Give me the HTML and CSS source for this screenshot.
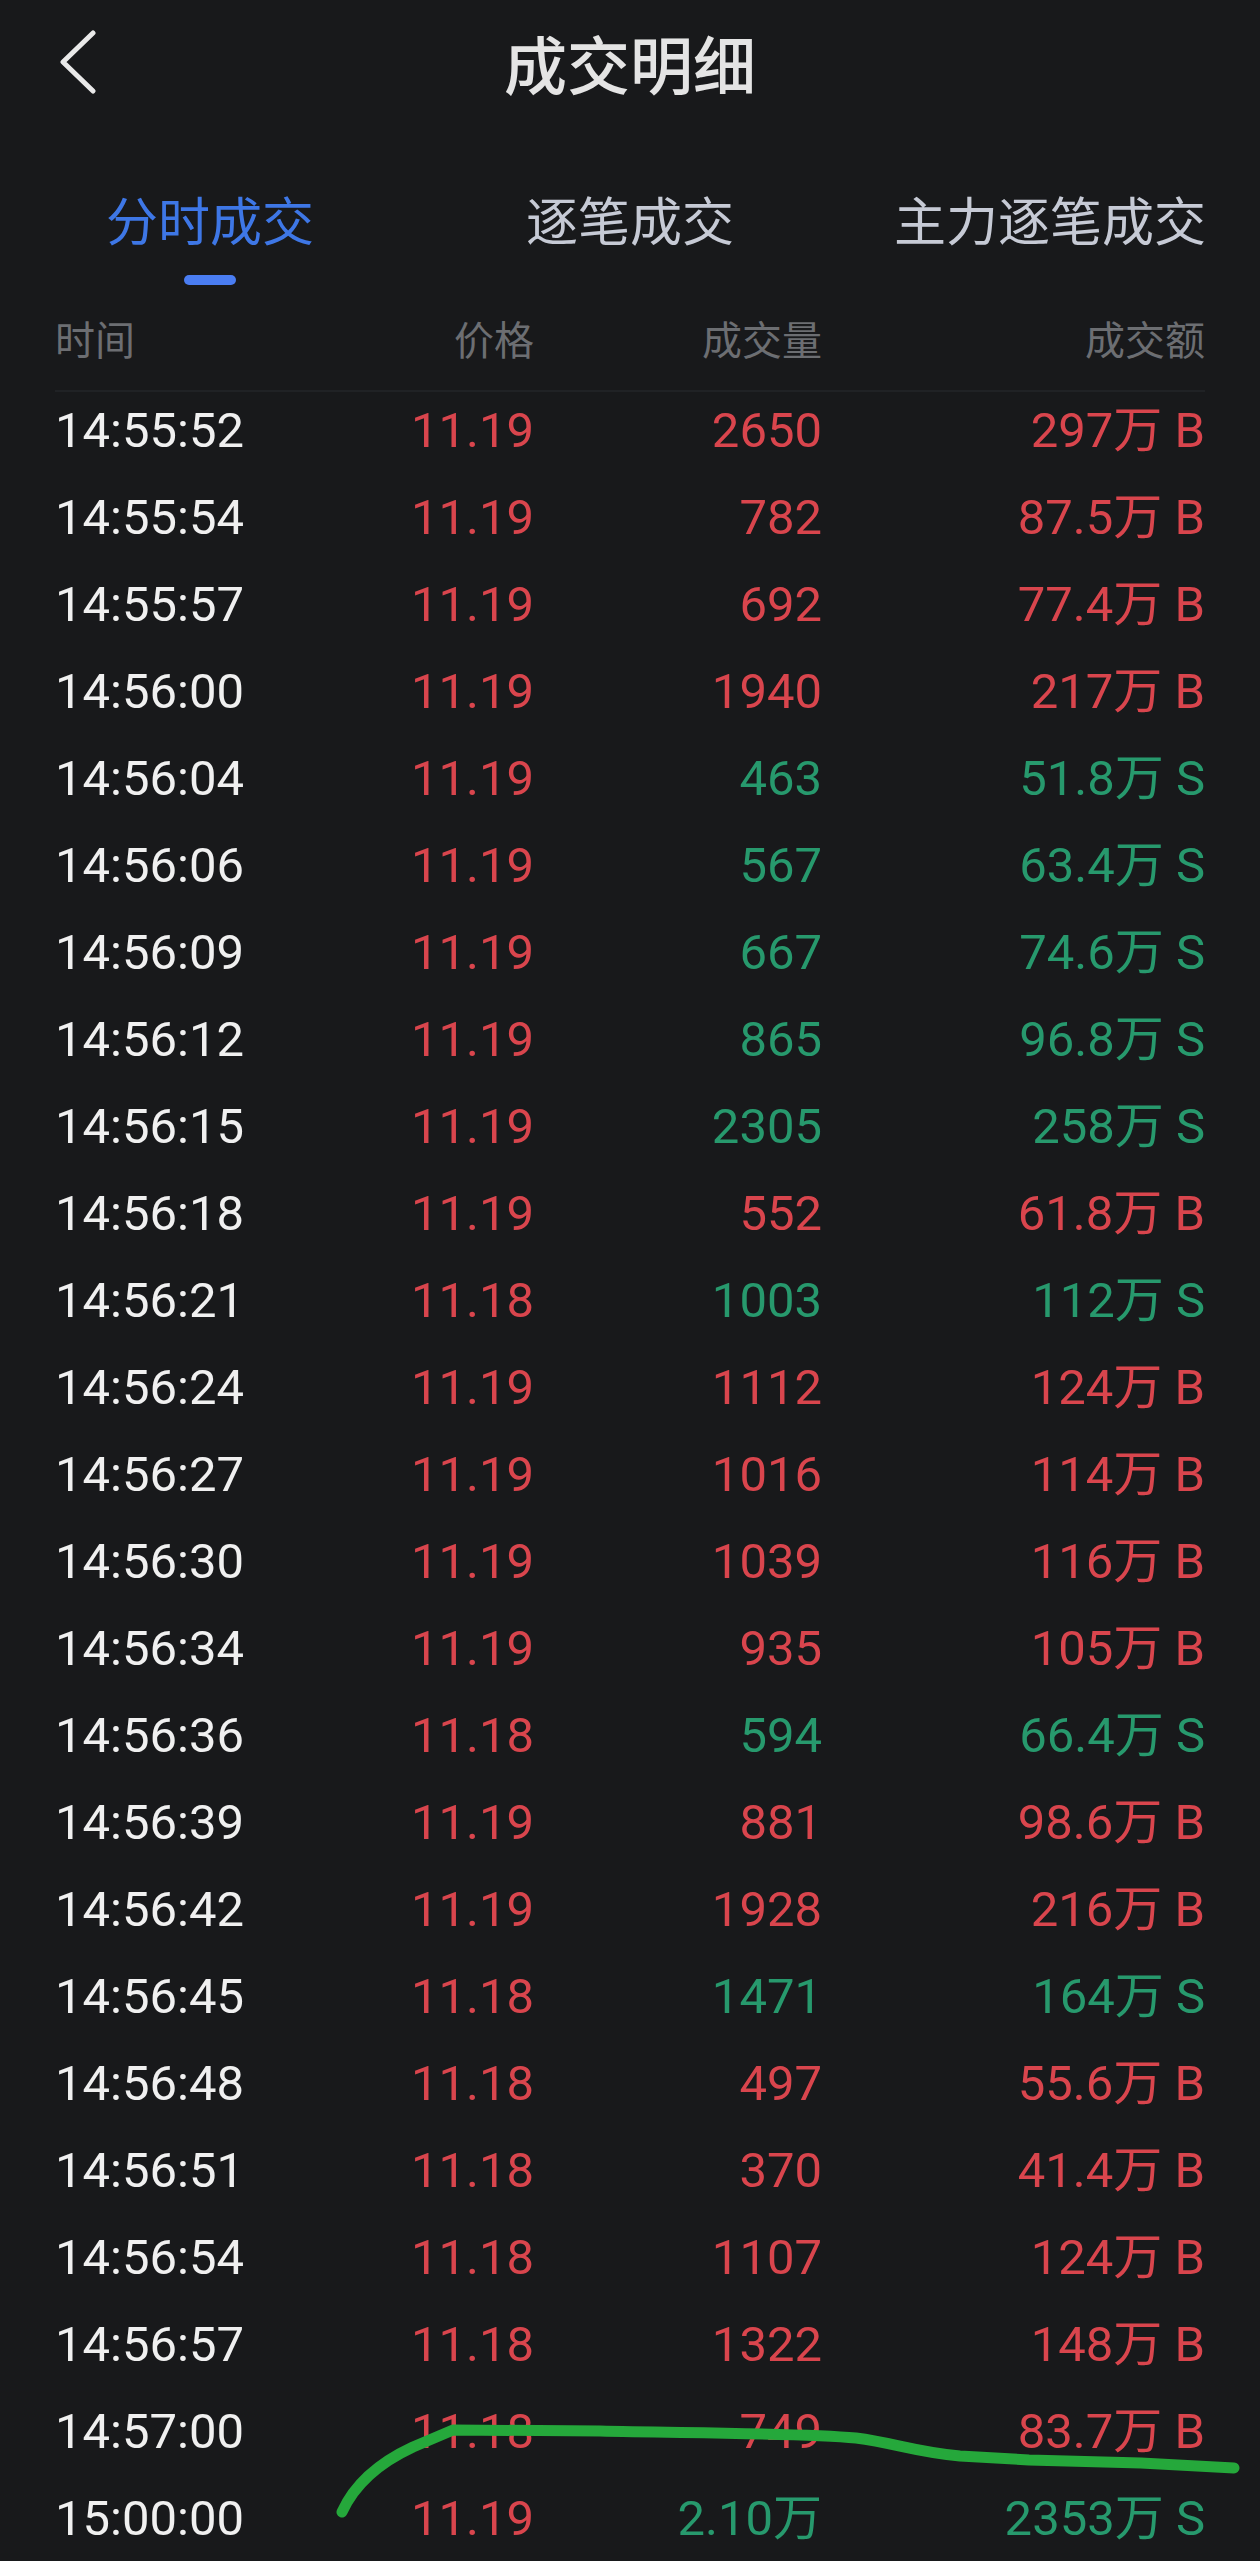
FILE: index.html
```html
<!DOCTYPE html>
<html lang="zh">
<head>
<meta charset="utf-8">
<title>成交明细</title>
<link rel="stylesheet" href="styles.css">
</head>
<body>
<div class="page">
  <header class="topbar">
    <div class="back">
      <svg width="40" height="64" viewBox="0 0 40 64"><path d="M35 3 L5 32 L35 61" fill="none" stroke="#e9e9e9" stroke-width="5" stroke-linecap="round" stroke-linejoin="round"/></svg>
    </div>
    <h1 class="title">成交明细</h1>
    <div class="spacer"></div>
  </header>

  <nav class="tabs">
    <div class="tab active"><span class="tab-label">分时成交</span><span class="indicator"></span></div>
    <div class="tab"><span class="tab-label">逐笔成交</span><span class="indicator"></span></div>
    <div class="tab"><span class="tab-label">主力逐笔成交</span><span class="indicator"></span></div>
  </nav>

  <div class="grid head">
    <span class="h-l">时间</span>
    <span class="c-r">价格</span>
    <span class="c-r">成交量</span>
    <span class="c-r">成交额</span>
  </div>

  <div class="rows">
    <div class="grid row"><span class="c-time">14:55:52</span><span class="c-r up">11.19</span><span class="c-r up">2650</span><span class="c-r up">297万 B</span></div>
    <div class="grid row"><span class="c-time">14:55:54</span><span class="c-r up">11.19</span><span class="c-r up">782</span><span class="c-r up">87.5万 B</span></div>
    <div class="grid row"><span class="c-time">14:55:57</span><span class="c-r up">11.19</span><span class="c-r up">692</span><span class="c-r up">77.4万 B</span></div>
    <div class="grid row"><span class="c-time">14:56:00</span><span class="c-r up">11.19</span><span class="c-r up">1940</span><span class="c-r up">217万 B</span></div>
    <div class="grid row"><span class="c-time">14:56:04</span><span class="c-r up">11.19</span><span class="c-r down">463</span><span class="c-r down">51.8万 S</span></div>
    <div class="grid row"><span class="c-time">14:56:06</span><span class="c-r up">11.19</span><span class="c-r down">567</span><span class="c-r down">63.4万 S</span></div>
    <div class="grid row"><span class="c-time">14:56:09</span><span class="c-r up">11.19</span><span class="c-r down">667</span><span class="c-r down">74.6万 S</span></div>
    <div class="grid row"><span class="c-time">14:56:12</span><span class="c-r up">11.19</span><span class="c-r down">865</span><span class="c-r down">96.8万 S</span></div>
    <div class="grid row"><span class="c-time">14:56:15</span><span class="c-r up">11.19</span><span class="c-r down">2305</span><span class="c-r down">258万 S</span></div>
    <div class="grid row"><span class="c-time">14:56:18</span><span class="c-r up">11.19</span><span class="c-r up">552</span><span class="c-r up">61.8万 B</span></div>
    <div class="grid row"><span class="c-time">14:56:21</span><span class="c-r up">11.18</span><span class="c-r down">1003</span><span class="c-r down">112万 S</span></div>
    <div class="grid row"><span class="c-time">14:56:24</span><span class="c-r up">11.19</span><span class="c-r up">1112</span><span class="c-r up">124万 B</span></div>
    <div class="grid row"><span class="c-time">14:56:27</span><span class="c-r up">11.19</span><span class="c-r up">1016</span><span class="c-r up">114万 B</span></div>
    <div class="grid row"><span class="c-time">14:56:30</span><span class="c-r up">11.19</span><span class="c-r up">1039</span><span class="c-r up">116万 B</span></div>
    <div class="grid row"><span class="c-time">14:56:34</span><span class="c-r up">11.19</span><span class="c-r up">935</span><span class="c-r up">105万 B</span></div>
    <div class="grid row"><span class="c-time">14:56:36</span><span class="c-r up">11.18</span><span class="c-r down">594</span><span class="c-r down">66.4万 S</span></div>
    <div class="grid row"><span class="c-time">14:56:39</span><span class="c-r up">11.19</span><span class="c-r up">881</span><span class="c-r up">98.6万 B</span></div>
    <div class="grid row"><span class="c-time">14:56:42</span><span class="c-r up">11.19</span><span class="c-r up">1928</span><span class="c-r up">216万 B</span></div>
    <div class="grid row"><span class="c-time">14:56:45</span><span class="c-r up">11.18</span><span class="c-r down">1471</span><span class="c-r down">164万 S</span></div>
    <div class="grid row"><span class="c-time">14:56:48</span><span class="c-r up">11.18</span><span class="c-r up">497</span><span class="c-r up">55.6万 B</span></div>
    <div class="grid row"><span class="c-time">14:56:51</span><span class="c-r up">11.18</span><span class="c-r up">370</span><span class="c-r up">41.4万 B</span></div>
    <div class="grid row"><span class="c-time">14:56:54</span><span class="c-r up">11.18</span><span class="c-r up">1107</span><span class="c-r up">124万 B</span></div>
    <div class="grid row"><span class="c-time">14:56:57</span><span class="c-r up">11.18</span><span class="c-r up">1322</span><span class="c-r up">148万 B</span></div>
    <div class="grid row"><span class="c-time">14:57:00</span><span class="c-r up">11.18</span><span class="c-r up">749</span><span class="c-r up">83.7万 B</span></div>
    <div class="grid row"><span class="c-time">15:00:00</span><span class="c-r up">11.19</span><span class="c-r down">2.10万</span><span class="c-r down">2353万 S</span></div>
  </div>

  <svg class="scribble" width="1260" height="2561" viewBox="0 0 1260 2561">
    <path d="M342 2512 C352 2490 372 2466 413 2447 L453 2430 L600 2431 C680 2433 800 2433 856 2438 C895 2443 915 2452 960 2456 L1029 2460 L1141 2463 L1234 2468" fill="none" stroke="#25a83b" stroke-width="11" stroke-linecap="round" stroke-linejoin="round"/>
  </svg>
</div>
</body>
</html>
```
FILE: styles.css
```css
html, body {
  margin: 0;
  padding: 0;
  background: #18191b;
}
.page {
  position: relative;
  width: 1260px;
  height: 2561px;
  overflow: hidden;
  background: #18191b;
  font-family: Roboto, "Noto Sans CJK SC", sans-serif;
  color: #efefef;
}
.topbar {
  height: 124px;
  display: grid;
  grid-template-columns: 1fr auto 1fr;
  align-items: center;
}
.back {
  padding-left: 58px;
  display: flex;
  align-items: center;
}
.back svg { display: block; }
.title {
  margin: 0;
  font-family: "Noto Sans CJK SC", sans-serif;
  font-size: 63px;
  font-weight: 500;
  line-height: 76px;
  color: #e4e4e4;
}
.tabs {
  margin-top: 64px;
  display: flex;
}
.tab {
  flex: 1;
  display: flex;
  flex-direction: column;
  align-items: center;
}
.tab-label {
  font-family: "Noto Sans CJK SC", sans-serif;
  font-size: 52px;
  line-height: 62px;
  color: #c6cad5;
}
.indicator {
  margin-top: 25px;
  width: 52px;
  height: 10px;
  border-radius: 5px;
  background: transparent;
}
.tab.active .tab-label { color: #3e77e6; }
.tab.active .indicator { background: #4a7df2; }

.grid {
  display: grid;
  grid-template-columns: 275px 204px 288px 1fr;
  margin: 0 55px;
}
.c-r { text-align: right; }
.head {
  margin-top: 29px;
  font-family: "Noto Sans CJK SC", sans-serif;
  font-size: 40px;
  line-height: 48px;
  color: #6c6e72;
  padding-bottom: 28px;
  border-bottom: 2px solid #202225;
}
.h-l { text-align: left; }
.row {
  height: 87px;
  font-size: 49px;
  line-height: 77px;
  box-sizing: border-box;
  padding-bottom: 10px;
  white-space: nowrap;
}
.c-time { color: #f0f0f0; }
.up { color: #d9454d; }
.down { color: #27996d; }
.scribble {
  position: absolute;
  left: 0;
  top: 0;
  pointer-events: none;
}
```
